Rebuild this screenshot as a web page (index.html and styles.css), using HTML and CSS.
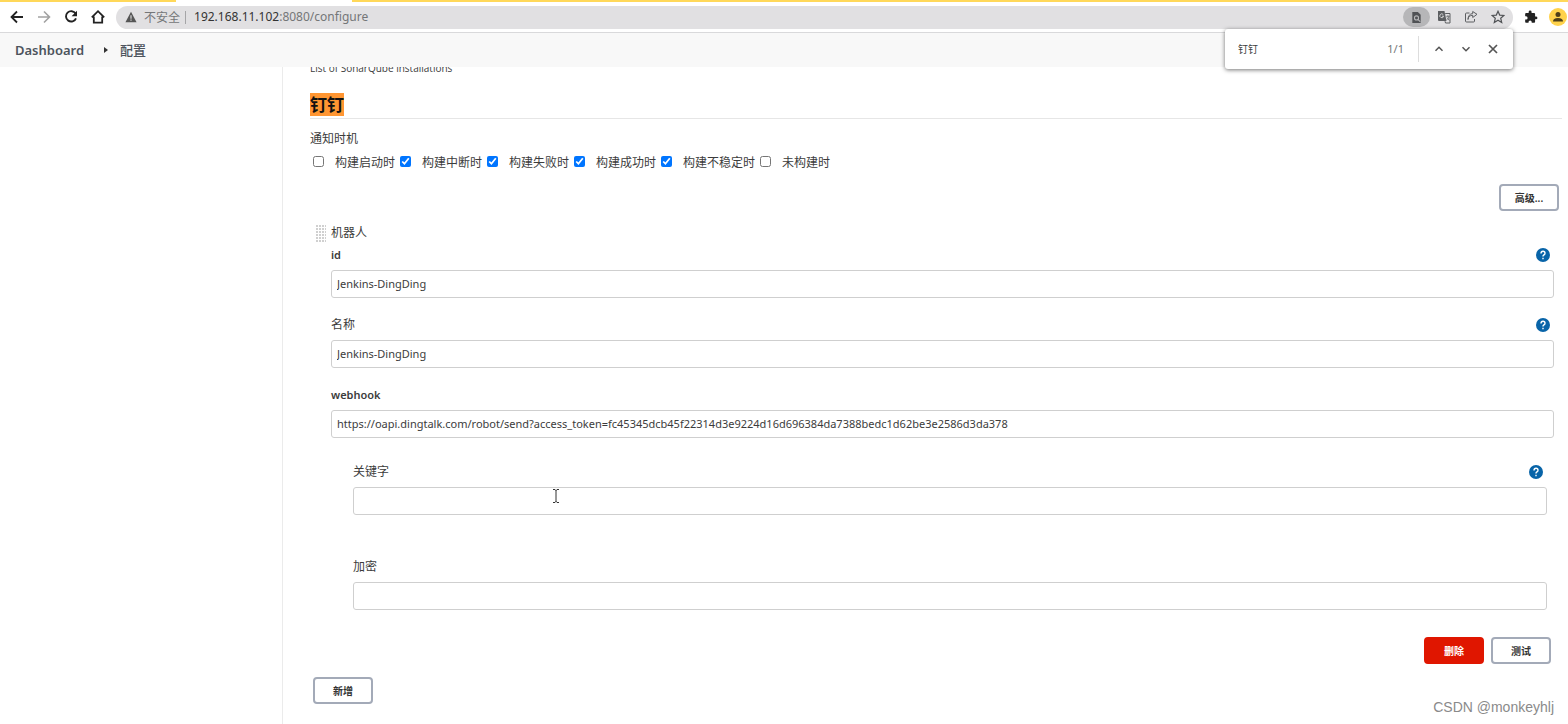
FILE: index.html
```html
<!DOCTYPE html>
<html lang="zh-CN">
<head>
<meta charset="utf-8">
<title>配置</title>
<link rel="stylesheet" href="styles.css">
</head>
<body>
<header class="browser">
  <div class="tabstrip"><span class="tab-active"></span></div>
  <div class="toolbar">
    <nav class="nav">
      <button class="icon-btn" aria-label="后退"><svg viewBox="0 0 16 16"><path d="M14 8H2.5M8 2.5 2.5 8 8 13.5" fill="none" stroke="#222" stroke-width="1.8"/></svg></button>
      <button class="icon-btn" aria-label="前进"><svg viewBox="0 0 16 16"><path d="M2 8h11.500M8 2.500 13.500 8 8 13.500" fill="none" stroke="#a2a2a2" stroke-width="1.600"/></svg></button>
      <button class="icon-btn" aria-label="刷新"><svg viewBox="0 0 16 16"><path d="M12.600 4.600A5.200 5.200 0 1 0 13 9.300" fill="none" stroke="#222" stroke-width="1.900"/><path d="M14 1.800V7.200H8.600z" fill="#222"/></svg></button>
      <button class="icon-btn" aria-label="主页"><svg viewBox="0 0 16 16"><path d="M1.800 8.400 8 2.200l6.200 6.200M3.800 7.500v6.200h8.400V7.500" fill="none" stroke="#222" stroke-width="1.800"/></svg></button>
    </nav>
    <div class="omnibox">
      <svg class="warn" viewBox="0 0 14 14"><path d="M7 1 13.500 13H.5z" fill="#555"/><path d="M7 5v4M7 10v1.500" stroke="#e1e1e3" stroke-width="1.300"/></svg>
      <span class="insecure">不安全</span>
      <span class="url"><b>192.168.11.102</b>:8080/configure</span>
      <div class="omni-actions">
        <button class="pill" aria-label="查找"><svg viewBox="0 0 14 14"><path d="M2.500 1h6l3 3v9h-9z" fill="#505255"/><circle cx="7" cy="7.500" r="2.200" fill="none" stroke="#b6b6b8" stroke-width="1.200"/><path d="m8.500 9 2.500 2.500" stroke="#b6b6b8" stroke-width="1.200"/></svg></button>
        <button class="icon-btn" aria-label="翻译"><svg viewBox="0 0 14 14"><path d="M1 1h6.500l2 10H2q-1 0-1-1z" fill="#5c5e61"/><path d="M8.200 3.500H13V13H8.500L8 11.200" fill="none" stroke="#5c5e61"/><path d="M9.300 6.300h3.200M10.900 5.300v1M12 6.500q-.4 2-2 3.200M10 7.500l2.300 3" fill="none" stroke="#5c5e61" stroke-width=".8"/><path d="M6.300 4.700A1.900 1.900 0 1 0 6.600 6.200H5" fill="none" stroke="#ddd" stroke-width=".9"/></svg></button>
        <button class="icon-btn" aria-label="分享"><svg viewBox="0 0 14 14"><path d="M5.500 3H2.500Q1.500 3 1.500 4v7q0 1 1 1h7q1 0 1-1V9M4 9.500q.3-4 4.700-4.300V7.500L13 4.300 8.700 1.500v2Q4.200 4 4 9.500z" fill="none" stroke="#5c5e61"/></svg></button>
        <button class="icon-btn" aria-label="收藏"><svg viewBox="0 0 14 14"><path d="m7 1.300 1.700 3.800 4.200.4-3.200 2.700 1 4.200L7 10.200l-3.700 2.200 1-4.200-3.200-2.700 4.200-.4z" fill="none" stroke="#505255" stroke-width="1.200"/></svg></button>
      </div>
    </div>
    <button class="icon-btn ext" aria-label="扩展程序"><svg viewBox="0 0 24 24"><path d="M20.500 11H19V7c0-1.100-.9-2-2-2h-4V3.500a2.500 2.500 0 0 0-5 0V5H4c-1.100 0-2 .9-2 2v3.800h1.500a2.700 2.700 0 0 1 0 5.400H2V20c0 1.100.9 2 2 2h3.800v-1.500a2.700 2.700 0 0 1 5.400 0V22H17c1.100 0 2-.9 2-2v-4h1.500a2.500 2.500 0 0 0 0-5z" fill="#222"/></svg></button>
    <button class="avatar" aria-label="个人资料"><svg viewBox="0 0 18 18"><circle cx="9" cy="9" r="9" fill="#ffd24b"/><circle cx="9" cy="6.500" r="2.500" fill="#4e3f19"/><path d="M4 13.500q0-3.500 5-3.500t5 3.500z" fill="#4e3f19"/></svg></button>
  </div>
  <div class="findbar" role="search">
    <input class="find-input" type="text" value="钉钉" aria-label="在页面中查找">
    <span class="find-count">1/1</span>
    <button class="icon-btn" aria-label="上一个"><svg viewBox="0 0 14 14"><path d="m3.500 8.800L7 5.300l3.500 3.500" fill="none" stroke="#555" stroke-width="1.500"/></svg></button>
    <button class="icon-btn" aria-label="下一个"><svg viewBox="0 0 14 14"><path d="m3.500 5.300L7 8.800l3.500-3.500" fill="none" stroke="#555" stroke-width="1.500"/></svg></button>
    <button class="icon-btn" aria-label="关闭"><svg viewBox="0 0 14 14"><path d="m3 3 8 8m0-8-8 8" fill="none" stroke="#555" stroke-width="1.700"/></svg></button>
  </div>
</header>

<nav class="breadcrumb">
  <a href="#">Dashboard</a>
  <svg class="crumb-arrow" viewBox="0 0 4 6"><path d="M0 0 4 3 0 6z" fill="#333"/></svg>
  <a href="#" class="crumb-cn">配置</a>
</nav>

<div class="page">
  <aside class="side"></aside>
  <main class="content">
    <p class="description">List of SonarQube installations</p>
    <h2 class="section-title"><mark>钉钉</mark></h2>
    <fieldset class="timing">
      <legend>通知时机</legend>
      <div class="checks">
        <label><input type="checkbox">构建启动时</label>
        <label><input type="checkbox" checked>构建中断时</label>
        <label><input type="checkbox" checked>构建失败时</label>
        <label><input type="checkbox" checked>构建成功时</label>
        <label><input type="checkbox" checked>构建不稳定时</label>
        <label><input type="checkbox">未构建时</label>
      </div>
    </fieldset>
    <div class="advanced"><button class="btn">高级...</button></div>

    <section class="robot">
      <div class="robot-head">
        <svg class="grip" viewBox="0 0 10 17"><defs><pattern id="dots" width="3" height="3" patternUnits="userSpaceOnUse"><path d="M0 0h2v2H0z" fill="#d0d0d0"/></pattern></defs><path d="M0 0h10v17H0z" fill="url(#dots)"/></svg>
        <span>机器人</span>
      </div>
      <div class="fields">
        <div class="field">
          <div class="field-head"><label class="latin" for="rid">id</label><button class="help" aria-label="帮助"><svg viewBox="0 0 14 14"><circle cx="7" cy="7" r="7" fill="#0864a8"/><path d="M5 5.500Q5 3.300 7 3.300t2 1.900Q9 6.400 7.700 7 7 7.500 7 8.500M7 9.700v1.500" fill="none" stroke="#fff" stroke-width="1.400"/></svg></button></div>
          <input class="text" id="rid" type="text" value="Jenkins-DingDing">
        </div>
        <div class="field">
          <div class="field-head"><label for="rname">名称</label><button class="help" aria-label="帮助"><svg viewBox="0 0 14 14"><circle cx="7" cy="7" r="7" fill="#0864a8"/><path d="M5 5.500Q5 3.300 7 3.300t2 1.900Q9 6.400 7.700 7 7 7.500 7 8.500M7 9.700v1.500" fill="none" stroke="#fff" stroke-width="1.400"/></svg></button></div>
          <input class="text" id="rname" type="text" value="Jenkins-DingDing">
        </div>
        <div class="field">
          <div class="field-head"><label class="latin" for="hook">webhook</label></div>
          <input class="text" id="hook" type="text" value="https://oapi.dingtalk.com/robot/send?access_token=fc45345dcb45f22314d3e9224d16d696384da7388bedc1d62be3e2586d3da378">
        </div>
        <div class="security">
          <div class="field">
            <div class="field-head"><label for="keyword">关键字</label><button class="help" aria-label="帮助"><svg viewBox="0 0 14 14"><circle cx="7" cy="7" r="7" fill="#0864a8"/><path d="M5 5.500Q5 3.300 7 3.300t2 1.900Q9 6.400 7.700 7 7 7.500 7 8.500M7 9.700v1.500" fill="none" stroke="#fff" stroke-width="1.400"/></svg></button></div>
            <input class="text" id="keyword" type="text">
          </div>
          <div class="field">
            <div class="field-head"><label for="secret">加密</label></div>
            <input class="text" id="secret" type="text">
          </div>
        </div>
        <div class="actions">
          <button class="btn danger">删除</button>
          <button class="btn">测试</button>
        </div>
      </div>
    </section>
    <button class="btn add">新增</button>
  </main>
</div>
<svg class="cursor" viewBox="0 0 8 14"><path d="M1 .5h2l1 1 1-1h2M4 1v12M1 13.500h2l1-1 1 1h2" fill="none" stroke="#333"/></svg>
<div class="watermark">CSDN @monkeyhlj</div>
</body>
</html>
```
FILE: styles.css
```css
* { box-sizing: border-box; }
body {
  margin: 0;
  height: 100vh;
  overflow: hidden;
  display: flex;
  flex-direction: column;
  background: #fff;
  color: #3c3c3c;
  font: 12px/18px "Noto Sans", "Noto Sans CJK SC", sans-serif;
}
button, input { font: inherit; color: inherit; }
button { padding: 0; border: 0; background: none; }
svg { display: block; }
a { color: inherit; text-decoration: none; }

.browser { position: relative; border-bottom: 1px solid #d9d9db; }
.tabstrip { height: 2px; padding-left: 176px; background: #ffd859; }
.tab-active { display: block; width: 176px; height: 2px; background: #fff; }
.toolbar { display: flex; align-items: center; height: 30px; padding: 0 1px 0 9px; gap: 10px; }
.nav { display: flex; gap: 11px; }
.icon-btn { display: flex; align-items: center; justify-content: center; width: 16px; height: 16px; }
.icon-btn svg { width: 100%; height: 100%; }
.ext svg { width: 14px; height: 14px; }
.omnibox {
  flex: 1;
  display: flex;
  align-items: center;
  height: 23px;
  padding: 0 8px 0 9px;
  border-radius: 12px;
  background: #e1e0e2;
  color: #747678;
}
.warn { width: 12px; height: 12px; margin-right: 7px; }
.insecure { padding-right: 5px; border-right: 1px solid #a5a5a7; line-height: 13px; }
.url { margin-left: 8px; font-size: 12px; }
.url b { font-weight: 400; color: #333; }
.omni-actions { display: flex; align-items: center; gap: 13px; margin-left: auto; }
.omni-actions .icon-btn { width: 14px; height: 14px; }
.pill { display: flex; align-items: center; justify-content: center; width: 27px; height: 20px; margin-right: -6px; border-radius: 10px; background: #b6b6b8; }
.pill svg { width: 13px; height: 13px; }
.avatar { width: 18px; height: 18px; }
.avatar svg { width: 18px; height: 18px; }

.findbar {
  position: absolute;
  top: 29px;
  right: 55px;
  z-index: 2;
  display: flex;
  align-items: center;
  gap: 13px;
  width: 288px;
  height: 40px;
  padding: 0 13px;
  border-radius: 3px;
  background: #fff;
  box-shadow: 0 1px 4px #0000008c;
}
.find-input { flex: 1; min-width: 0; padding: 0; border: 0; outline: 0; font-size: 10px; }
.find-count { padding-right: 14px; border-right: 1px solid #ddd; color: #747678; font-size: 11px; line-height: 26px; }
.findbar .icon-btn { width: 14px; height: 14px; }

.breadcrumb {
  display: flex;
  align-items: center;
  gap: 20px;
  height: 34px;
  flex: none;
  padding: 0 15px;
  background: #f8f8f8;
  color: #4d545d;
  font-size: 13px;
  font-weight: 600;
}
.crumb-arrow { width: 4px; height: 6px; }
.crumb-cn { font-weight: 500; margin-left: -8px; }

.page { flex: 1; min-height: 0; display: flex; overflow: hidden; }
.side { width: 283px; flex: none; border-right: 1px solid #ebebeb; }
.content { flex: 1; min-width: 0; padding: 0 6px 0 27px; }
.description { margin: -8px 0 0; font-family: "Open Sans", sans-serif; font-size: 10px; }
.section-title { margin: 16px 0 0; padding-bottom: 2px; border-bottom: 1px solid #e6e6e6; font-size: 17px; line-height: 23px; }
.section-title mark { display: inline-block; height: 23px; background: #ff9632; color: #111; }
.timing { margin: 11px 0 0; padding: 0; border: 0; }
.timing legend { padding: 0; }
.checks { display: flex; margin-top: 6px; padding-left: 3px; gap: 5px; }
.checks label { display: flex; align-items: center; }
.checks input { width: 11px; height: 11px; margin: 0 11px 3px 0; }
.advanced { display: flex; justify-content: flex-end; margin-top: 12px; padding-right: 3px; }
.btn { width: 60px; height: 27px; border: 2px solid #a3aab8; border-radius: 4px; background: #fff; color: #333; font-size: 10px; font-weight: 600; line-height: 20px; }
.btn.danger { border-color: #e01600; background: #e01600; color: #fff; }

.robot { margin-top: 13px; }
.robot-head { display: flex; align-items: center; gap: 5px; padding-left: 6px; }
.grip { width: 10px; height: 17px; }
.fields { display: flex; flex-direction: column; gap: 18px; padding: 4px 8px 0 21px; }
.field-head { display: flex; align-items: center; justify-content: space-between; height: 18px; margin-bottom: 6px; padding-right: 4px; }
.latin { font-size: 11px; font-weight: 600; }
.help { height: 16px; }
.help svg { width: 14px; height: 14px; }
.text { display: block; width: 100%; height: 28px; padding: 0 5px 2px; border: 1px solid #cfcfcf; border-radius: 3px; background: #fff; outline: 0; font-size: 11px; }
.security { display: flex; flex-direction: column; gap: 43px; margin-top: 7px; padding: 0 7px 0 22px; }
.actions { display: flex; justify-content: flex-end; gap: 7px; margin-top: 9px; padding-right: 3px; }
.btn.add { margin: 13px 0 0 3px; }

.cursor { position: absolute; left: 552px; top: 489px; width: 8px; height: 14px; }
.watermark { position: absolute; right: 14px; bottom: 8px; color: #8a8a8a; font: 14px/18px "Liberation Sans", Arial, sans-serif; }
```
